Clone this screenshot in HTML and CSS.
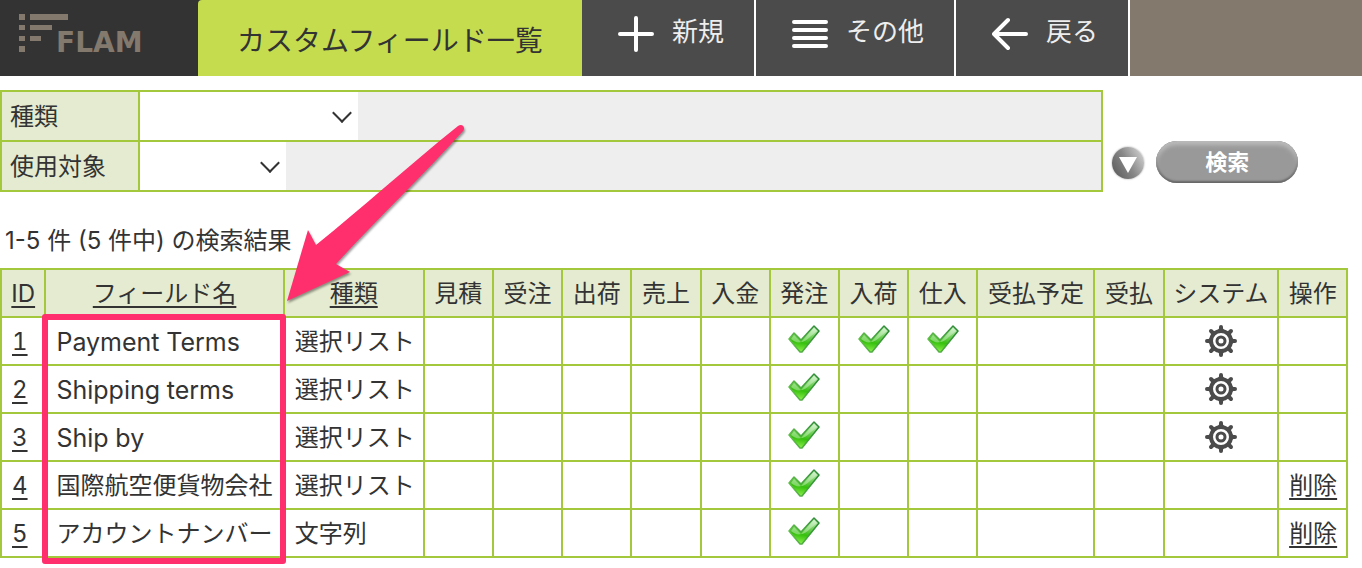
FILE: index.html
```html
<!DOCTYPE html>
<html lang="ja">

<head>
    <meta charset="UTF-8">
    <meta name="viewport" content="width=device-width, initial-scale=1.0">
    <title>カスタムフィールド一覧</title>
    <link rel="stylesheet" href="styles.css">
</head>

<body>
    <!-- shared icons -->
    <svg class="sprite" aria-hidden="true">
        <defs>
            <linearGradient id="check-fill" x1="0.6" y1="0" x2="0.4" y2="1">
                <stop offset="0" stop-color="#c4edbd" />
                <stop offset="0.4" stop-color="#6bcf52" />
                <stop offset="0.65" stop-color="#35c00c" />
                <stop offset="1" stop-color="#8af04a" />
            </linearGradient>
            <linearGradient id="check-line" x1="0" y1="0.5" x2="1" y2="0.3">
                <stop offset="0" stop-color="#62bd4a" />
                <stop offset="1" stop-color="#2b8a35" />
            </linearGradient>
        </defs>
        <symbol id="check" viewBox="0 0 32 32">
            <path d="M1 14 L6 8 L13 15 L26 1 L31 6 L14 27 L12 27 Z" fill="url(#check-fill)" stroke="url(#check-line)" stroke-width="1.5" stroke-linejoin="round" />
            <path d="M3 14 L6 10 L13 17 L26 3 L29 6 C22 12 18 16 14 17 C9 18 7 17 3 14 Z" fill="#fff" opacity="0.35" />
        </symbol>
        <symbol id="gear" viewBox="0 0 32 32">
            <g stroke="#4b4b4b" stroke-width="4" stroke-linecap="round">
                <path d="M16 2V7M16 25V30M2 16H7M25 16H30M6 6L9 9M23 23L26 26M26 6L23 9M9 23L6 26" />
            </g>
            <path d="M13 7L16 2L19 7ZM13 25L16 30L19 25ZM7 13L2 16L7 19ZM25 13L30 16L25 19Z" fill="#4b4b4b" stroke="#4b4b4b" stroke-width="2" stroke-linejoin="round" />
            <circle cx="16" cy="16" r="10" fill="#fff" stroke="#4b4b4b" stroke-width="4" />
            <circle cx="16" cy="16" r="4" fill="none" stroke="#4b4b4b" stroke-width="3" />
        </symbol>
    </svg>

    <header class="header">
        <a class="logo" href="#" aria-label="FLAM">
            <svg class="logo-mark" viewBox="0 0 49 38">
                <path d="M0 0h6v6H0zM0 11h6v5H0zM0 22h6v5H0zM0 32h6v6H0zM11 0h38v6H11zM11 11h22v5H11zM11 22h11v5H11z" />
            </svg>
            <span class="logo-text">FLAM</span>
        </a>
        <h1 class="title">カスタムフィールド一覧</h1>
        <nav class="menu">
            <button class="menu-btn" type="button">
                <svg class="menu-icon" viewBox="0 0 36 36"><path d="M18 2V34M2 18H34" /></svg>
                <span class="menu-label">新規</span>
            </button>
            <button class="menu-btn" type="button">
                <svg class="menu-icon" viewBox="0 0 36 36"><path d="M2 6H34M2 14H34M2 22H34M2 30H34" /></svg>
                <span class="menu-label">その他</span>
            </button>
            <button class="menu-btn" type="button">
                <svg class="menu-icon" viewBox="0 0 36 36"><path d="M34 18H3M16 4L2 18L16 32" /></svg>
                <span class="menu-label">戻る</span>
            </button>
        </nav>
    </header>

    <form class="search">
        <table class="search-table">
            <tr>
                <th><label for="kind">種類</label></th>
                <td>
                    <div class="select select-kind"><select id="kind"><option></option></select></div>
                </td>
            </tr>
            <tr>
                <th><label for="target">使用対象</label></th>
                <td>
                    <div class="select select-target"><select id="target"><option></option></select></div>
                </td>
            </tr>
        </table>
        <button class="toggle-btn" type="button" aria-label="条件を開く">
            <svg viewBox="0 0 32 32"><path d="M7 10H25L16 26Z" fill="#fff" /></svg>
        </button>
        <button class="search-btn" type="button">検索</button>
    </form>

    <main class="results">
        <p class="count">1-5 件 (5 件中) の検索結果</p>
        <table class="list">
            <colgroup>
                <col class="col-id">
                <col class="col-name">
                <col class="col-kind">
                <col span="8">
                <col class="col-plan">
                <col>
                <col class="col-system">
                <col>
            </colgroup>
            <thead>
                <tr>
                    <th><a href="#">ID</a></th>
                    <th><a href="#">フィールド名</a></th>
                    <th><a href="#">種類</a></th>
                    <th>見積</th>
                    <th>受注</th>
                    <th>出荷</th>
                    <th>売上</th>
                    <th>入金</th>
                    <th>発注</th>
                    <th>入荷</th>
                    <th>仕入</th>
                    <th>受払予定</th>
                    <th>受払</th>
                    <th>システム</th>
                    <th>操作</th>
                </tr>
            </thead>
            <tbody>
                <tr>
                    <td><a href="#">1</a></td>
                    <td class="latin">Payment Terms</td>
                    <td>選択リスト</td>
                    <td></td><td></td><td></td><td></td><td></td>
                    <td class="mark"><svg><use href="#check" /></svg></td>
                    <td class="mark"><svg><use href="#check" /></svg></td>
                    <td class="mark"><svg><use href="#check" /></svg></td>
                    <td></td><td></td>
                    <td class="mark"><svg><use href="#gear" /></svg></td>
                    <td></td>
                </tr>
                <tr>
                    <td><a href="#">2</a></td>
                    <td class="latin">Shipping terms</td>
                    <td>選択リスト</td>
                    <td></td><td></td><td></td><td></td><td></td>
                    <td class="mark"><svg><use href="#check" /></svg></td>
                    <td></td><td></td><td></td><td></td>
                    <td class="mark"><svg><use href="#gear" /></svg></td>
                    <td></td>
                </tr>
                <tr>
                    <td><a href="#">3</a></td>
                    <td class="latin">Ship by</td>
                    <td>選択リスト</td>
                    <td></td><td></td><td></td><td></td><td></td>
                    <td class="mark"><svg><use href="#check" /></svg></td>
                    <td></td><td></td><td></td><td></td>
                    <td class="mark"><svg><use href="#gear" /></svg></td>
                    <td></td>
                </tr>
                <tr>
                    <td><a href="#">4</a></td>
                    <td>国際航空便貨物会社</td>
                    <td>選択リスト</td>
                    <td></td><td></td><td></td><td></td><td></td>
                    <td class="mark"><svg><use href="#check" /></svg></td>
                    <td></td><td></td><td></td><td></td><td></td>
                    <td><a href="#">削除</a></td>
                </tr>
                <tr>
                    <td><a href="#">5</a></td>
                    <td>アカウントナンバー</td>
                    <td>文字列</td>
                    <td></td><td></td><td></td><td></td><td></td>
                    <td class="mark"><svg><use href="#check" /></svg></td>
                    <td></td><td></td><td></td><td></td><td></td>
                    <td><a href="#">削除</a></td>
                </tr>
            </tbody>
        </table>
        <!-- callout over the name column -->
        <div class="callout-box"></div>
        <svg class="callout-arrow" viewBox="0 0 180 180">
            <path d="M0 177 L21 106 L29 121 C75 84 120 43 171 2 C175 -1 179 3 176 7 C135 53 88 97 49 140 L63 148 Z" />
        </svg>
    </main>
</body>

</html>
```
FILE: styles.css
```css
* {
    box-sizing: border-box;
}

body {
    margin: 0;
    background-color: #fff;
    color: #333;
    font-family: Inter, "Noto Sans CJK JP", sans-serif;
    font-size: 24px;
    line-height: 32px;
}

button {
    border: 0;
    padding: 0;
    font-family: inherit;
    cursor: pointer;
}

a {
    color: inherit;
    text-underline-offset: 4px;
}

.sprite {
    position: absolute;
    width: 0;
    height: 0;
}

/* header */
.header {
    display: flex;
    height: 76px;
    background: linear-gradient(to right, #333 50%, #83796d 50%);
}

.logo {
    display: flex;
    align-items: flex-start;
    flex: 0 0 198px;
    padding: 14px 0 0 19px;
    text-decoration: none;
}

.logo-mark {
    flex-shrink: 0;
    width: 49px;
    height: 38px;
    fill: #83796d;
}

.logo-text {
    margin: 13px 0 0 -12px;
    color: #83796d;
    font-family: "DejaVu Sans", sans-serif;
    font-size: 28px;
    font-weight: bold;
}

.title {
    display: flex;
    align-items: center;
    justify-content: center;
    flex: 0 0 384px;
    margin: 0;
    padding-top: 6px;
    background-color: #c5dc4f;
    border-top-left-radius: 4px;
    font-size: 28px;
    font-weight: 400;
}

.menu {
    display: flex;
}

.menu-btn {
    display: flex;
    align-items: center;
    gap: 18px;
    padding: 0 30px 8px 36px;
    background-color: #4b4b4b;
    border-right: 2px solid #fff;
    color: #eee;
    font-size: 26px;
}

.menu-label {
    padding-bottom: 10px;
}

.menu-icon {
    width: 36px;
    height: 36px;
    fill: none;
    stroke: #fff;
    stroke-width: 4;
    stroke-linecap: round;
    stroke-linejoin: round;
}

/* search */
.search {
    display: flex;
    align-items: flex-end;
    margin-top: 14px;
}

.search-table {
    width: 81%;
    border-collapse: collapse;
    background-color: #eee;
}

.search-table th,
.search-table td {
    height: 50px;
    padding: 0;
    border: 2px solid #a4c83c;
}

.search-table th {
    width: 138px;
    padding: 2px 0 0 8px;
    background-color: #e5ebd0;
    font-weight: 400;
    text-align: left;
}

.select {
    position: relative;
    height: 48px;
}

.select-kind {
    width: 218px;
}

.select-target {
    width: 146px;
}

.select select {
    display: block;
    appearance: none;
    width: 100%;
    height: 100%;
    border: 0;
    border-radius: 0;
    background-color: #fff;
    font-size: 24px;
}

.select::after {
    content: "";
    position: absolute;
    top: 14px;
    right: 9px;
    width: 12px;
    height: 12px;
    border-right: 2px solid #333;
    border-bottom: 2px solid #333;
    transform: rotate(45deg);
    pointer-events: none;
}

.toggle-btn {
    width: 32px;
    height: 32px;
    margin: 0 12px 13px 9px;
    border-radius: 50%;
    background: linear-gradient(60deg, #555, #888 50%, #ddd);
    box-shadow: 0 0 2px #999;
}

.toggle-btn svg {
    display: block;
}

.search-btn {
    width: 142px;
    height: 42px;
    margin-bottom: 9px;
    padding-bottom: 4px;
    border-radius: 21px;
    background-color: #999;
    box-shadow: inset 0 4px 4px #bbb, inset 0 -1px 2px 1px #666;
    color: #fff;
    font-size: 22px;
    font-weight: 700;
}

/* results */
.results {
    position: relative;
    padding-bottom: 10px;
}

.count {
    margin: 0;
    padding: 33px 0 11px 5px;
}

.list {
    width: 99%;
    table-layout: fixed;
    border-collapse: collapse;
    font-variant-numeric: tabular-nums;
}

.list th,
.list td {
    height: 48px;
    padding: 2px 0 0 10px;
    border: 2px solid #a4c83c;
    white-space: nowrap;
}

.list th {
    padding: 2px 0 0;
    background-color: #e5ebd0;
    font-weight: 400;
}

.list .mark {
    padding: 0;
}

.list .latin {
    font-size: 25px;
}

.mark svg {
    display: block;
    width: 32px;
    height: 32px;
    margin: 0 auto;
}

.col-id {
    width: 3.3%;
}

.col-name {
    width: 17.7%;
}

.col-kind {
    width: 10.4%;
}

.col-plan {
    width: 8.7%;
}

.col-system {
    width: 8.5%;
}

/* callout */
.callout-box {
    position: absolute;
    top: 122px;
    left: 42px;
    width: 244px;
    height: 250px;
    border: 6px solid #ff2f6d;
    border-radius: 3px;
}

.callout-arrow {
    position: absolute;
    top: -68px;
    left: 287px;
    width: 180px;
    height: 180px;
    overflow: visible;
    fill: #ff2f6d;
    filter: drop-shadow(1px 2px 1px rgba(0, 0, 0, 0.4));
}
```
